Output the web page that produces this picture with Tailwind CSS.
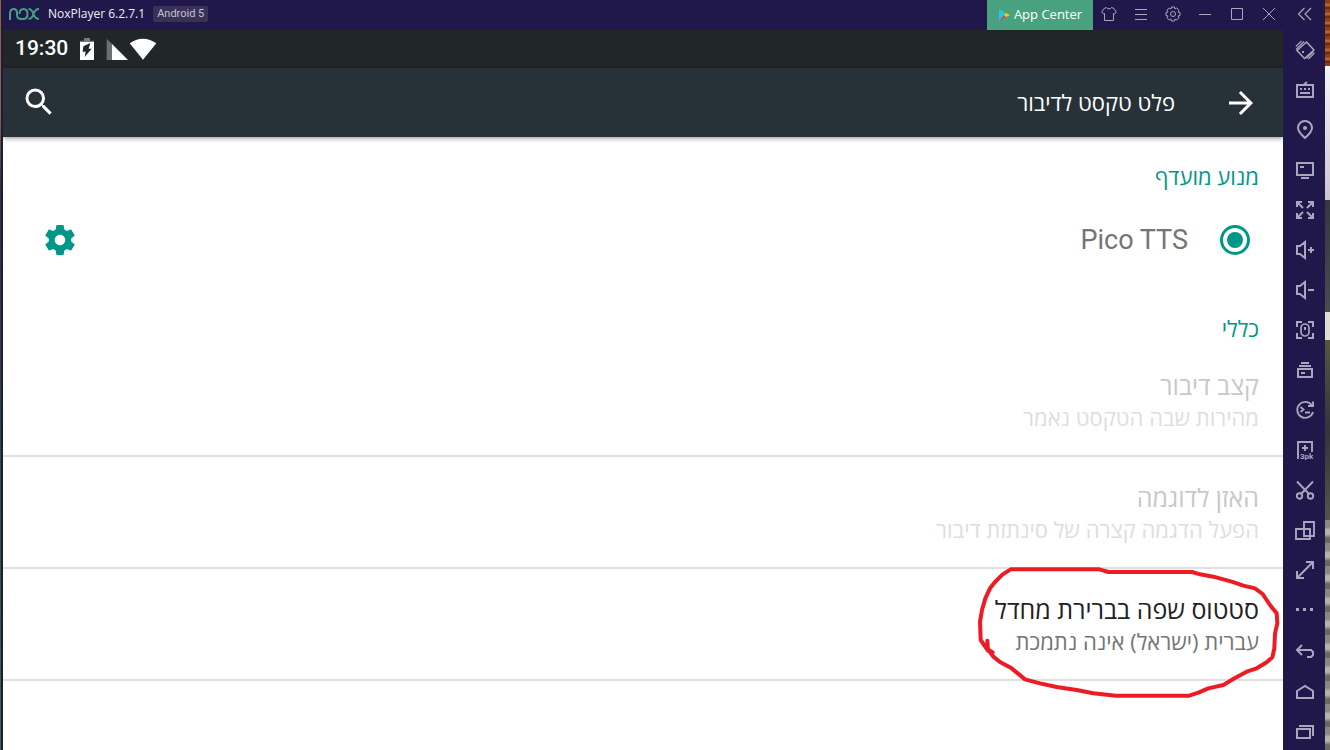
<!DOCTYPE html>
<html lang="he">
<head>
    <meta charset="UTF-8">
    <meta name="viewport" content="width=device-width, initial-scale=1.0">
    <title>NoxPlayer 6.2.7.1</title>
    <script src="https://cdn.jsdelivr.net/npm/@tailwindcss/browser@4"></script>
</head>
<body class="h-screen flex overflow-hidden bg-[#20184a] font-['Roboto','Open_Sans',sans-serif]">

    <!-- Desktop showing past the left edge -->
    <div class="w-px shrink-0 bg-linear-to-b from-[#8a6a30] from-15% via-[#28401f] via-25% to-[#3c6a35]"></div>

    <!-- Emulator window -->
    <div class="flex-1 min-w-0 flex flex-col">

        <!-- Title bar -->
        <header class="h-[30px] shrink-0 flex items-start text-[#a9a6bd]">
            <div class="h-7 flex items-center">
                <svg class="ml-2 w-[31px] h-3" viewBox="0 0 31 12" fill="none" stroke="#45a182" stroke-width="2" aria-hidden="true">
                    <path d="M1 12V6C1 2.500 2.500 1 4.500 1S8 2.500 8 5V7C8 9.500 10 11 12.500 11H14C17 11 18.500 9 18.500 6S17 1 14.500 1 10.500 3 10.500 6" />
                    <path d="M19.500 1C22.500 1 23.500 3 24.500 6S27 11 30 11M30 1C27 1 25.500 3 24.500 6S22.500 11 19.500 11" />
                </svg>
                <h1 class="ml-2 text-[12px] text-[#f0eff5] font-['Open_Sans',sans-serif]">NoxPlayer 6.2.7.1</h1>
                <span class="ml-2 px-1 h-4 leading-4 rounded-xs bg-[#3a3159] text-[11px] text-[#c5c2d3]">Android 5</span>
            </div>
            <button class="ml-auto w-[106px] h-full flex items-center justify-center gap-1 bg-[#48a27f] text-white text-[13px] font-['Open_Sans',sans-serif]">
                <svg class="w-3 h-3" viewBox="0 0 12 12" aria-hidden="true">
                    <path d="M1 0v12l5-6z" fill="#21c5f5" />
                    <path d="M1 0l7 4-2 2z" fill="#27d79b" />
                    <path d="M1 12l7-4-2-2z" fill="#ee3b55" />
                    <path d="M8 4l4 2-4 2-2-2z" fill="#fcc917" />
                </svg>
                App Center
            </button>
            <button class="w-8 h-7 grid place-items-center" aria-label="Theme">
                <svg class="w-4 h-4" viewBox="0 0 16 16" fill="none" stroke="currentColor"><path d="M5.500 1.500C6 3.300 10 3.300 10.500 1.500L13 2.500 15.300 6 13.500 8 12.500 7.500V14.500H3.500V7.500L2.500 8 .7 6 3 2.500z" /></svg>
            </button>
            <button class="w-8 h-7 grid place-items-center" aria-label="Menu">
                <svg class="w-4 h-4" viewBox="0 0 16 16" stroke="currentColor"><path d="M2 3.500h12M2 8.500h12M2 13.500h12" /></svg>
            </button>
            <button class="w-8 h-7 grid place-items-center" aria-label="Settings">
                <svg class="w-4 h-4" viewBox="0 0 16 16" fill="none" stroke="currentColor"><path d="M6.500 1h3l.5 2 1.800-1 2.200 2.200-1 1.800 2 .5v3l-2 .5 1 1.800-2.200 2.200-1.800-1-.5 2h-3L6 13l-1.800 1L2 11.800 3 10l-2-.5v-3L3 6 2 4.200 4.200 2 6 3z" /><circle cx="8" cy="8" r="2.500" /></svg>
            </button>
            <button class="w-8 h-7 grid place-items-center" aria-label="Minimize">
                <svg class="w-4 h-4" viewBox="0 0 16 16" stroke="currentColor"><path d="M2 8.500h12" /></svg>
            </button>
            <button class="w-8 h-7 grid place-items-center" aria-label="Maximize">
                <svg class="w-4 h-4" viewBox="0 0 16 16" fill="none" stroke="currentColor"><path d="M2.500 2.500h11v11h-11z" /></svg>
            </button>
            <button class="w-8 h-7 grid place-items-center" aria-label="Close">
                <svg class="w-4 h-4" viewBox="0 0 16 16" stroke="currentColor"><path d="M2 2l12 12M14 2L2 14" /></svg>
            </button>
            <button class="w-10 h-7 grid place-items-center" aria-label="Collapse toolbar">
                <svg class="w-4 h-4" viewBox="0 0 16 16" fill="none" stroke="currentColor" stroke-width="1.200"><path d="M7.500 2l-6 6 6 6M14 2L8 8l6 6" /></svg>
            </button>
        </header>

        <div class="flex-1 min-h-0 flex">

            <!-- Android screen -->
            <div class="ml-[2px] flex-1 min-w-0 flex flex-col bg-white overflow-hidden">

                <div class="h-[38px] shrink-0 flex items-center bg-[#212629] text-white">
                    <span class="ml-3 text-[21px] font-medium">19:30</span>
                    <svg class="ml-3 w-[14px] h-[22px]" viewBox="0 0 42 66" aria-hidden="true">
                        <path d="M0 8H12V0H30V8H42V14H0z" fill="#777b7d" />
                        <path d="M0 12H42V66H0z" fill="#fff" />
                        <path d="M31 15L10 25 8 41H17L14 57 35 32H26z" fill="#212629" />
                    </svg>
                    <svg class="ml-3 w-[22px] h-[22px]" viewBox="0 0 66 66" aria-hidden="true">
                        <path d="M2 2L18 18V66H2z" fill="#6b6f71" />
                        <path d="M18 18L66 66H18z" fill="#fff" />
                    </svg>
                    <svg class="ml-px w-7 h-[22px]" viewBox="0 0 84 66" aria-hidden="true">
                        <path d="M42 65L2 16Q20 2 42 2T82 16z" fill="#fff" />
                    </svg>
                </div>

                <div dir="rtl" class="h-[69px] shrink-0 flex items-center px-6 bg-[#263238] text-white shadow-[0_1px_5px_rgba(0,0,0,0.45)]">
                    <button aria-label="חזרה">
                        <svg class="w-9 h-9" viewBox="0 0 24 24" fill="currentColor"><path d="M12 4l-1.410 1.410L16.170 11H4v2h12.170l-5.580 5.590L12 20l8-8z" /></svg>
                    </button>
                    <h2 class="ms-12 text-[22px] font-['Open_Sans',sans-serif]">פלט טקסט לדיבור</h2>
                    <button class="ms-auto -me-[6px] pb-[2px]" aria-label="חיפוש">
                        <svg class="w-9 h-9" viewBox="0 0 24 24" fill="currentColor"><path d="M15.500 14h-.79l-.28-.27A6.471 6.471 0 0 0 16 9.500 6.500 6.500 0 1 0 9.500 16c1.610 0 3.090-.59 4.230-1.570l.27.280v.79l5 4.990L20.490 19l-4.990-5zm-6 0C7.010 14 5 11.990 5 9.500S7.010 5 9.500 5 14 7.010 14 9.500 11.990 14 9.500 14z" /></svg>
                    </button>
                </div>

                <main dir="rtl" class="font-['Open_Sans',sans-serif]">
                    <h3 class="px-6 pt-[23px] text-[22px] leading-8 text-[#009688]">מנוע מועדף</h3>
                    <div class="h-24 ps-[33px] pe-[39px] flex items-center">
                        <input id="pico" type="radio" name="engine" checked class="appearance-none w-[30px] h-[30px] rounded-full border-3 border-[#009688] p-1 bg-[#009688] bg-clip-content">
                        <label for="pico" class="ms-8 font-['Roboto',sans-serif] text-[27px] text-[#757575]">Pico TTS</label>
                        <button class="ms-auto text-[#009688]" aria-label="הגדרות Pico TTS">
                            <svg class="w-9 h-9" viewBox="0 0 24 24" fill="currentColor"><path d="M19.430 12.980c.04-.32.07-.64.07-.98s-.03-.66-.07-.98l2.110-1.650c.19-.15.24-.42.12-.64l-2-3.460c-.12-.22-.39-.3-.61-.22l-2.490 1c-.52-.4-1.080-.73-1.690-.98l-.38-2.650C14.460 2.180 14.250 2 14 2h-4c-.25 0-.46.18-.49.42l-.38 2.650c-.61.25-1.170.59-1.690.98l-2.490-1c-.23-.09-.49 0-.61.22l-2 3.460c-.13.22-.07.49.12.64l2.110 1.650c-.04.32-.07.65-.07.98s.03.66.07.98l-2.110 1.650c-.19.15-.24.42-.12.64l2 3.460c.12.22.39.3.61.22l2.490-1c.52.4 1.080.73 1.690.98l.38 2.650c.03.24.24.42.49.42h4c.25 0 .46-.18.49-.42l.38-2.650c.61-.25 1.170-.59 1.690-.98l2.490 1c.23.09.49 0 .61-.22l2-3.460c.12-.22.07-.49-.12-.64l-2.110-1.650zM12 15.500c-1.930 0-3.500-1.570-3.500-3.500s1.570-3.500 3.500-3.500 3.500 1.570 3.500 3.500-1.570 3.500-3.500 3.500z" /></svg>
                        </button>
                    </div>
                    <h3 class="px-6 pt-6 text-[22px] leading-8 text-[#009688]">כללי</h3>

                    <ul class="pt-px">
                        <li class="h-28 px-6 pt-6 border-b-2 border-[#e0e0e0]">
                            <p class="text-[25px] leading-8 text-[#c8c8c8]">קצב דיבור</p>
                            <p class="text-[22px] leading-8 text-[#dedede]">מהירות שבה הטקסט נאמר</p>
                        </li>
                        <li class="h-28 px-6 pt-6 border-b-2 border-[#e0e0e0]">
                            <p class="text-[25px] leading-8 text-[#c8c8c8]">האזן לדוגמה</p>
                            <p class="text-[22px] leading-8 text-[#dedede]">הפעל הדגמה קצרה של סינתזת דיבור</p>
                        </li>
                        <li class="relative h-28 px-6 pt-6 border-b-2 border-[#e0e0e0]">
                            <p class="text-[25px] leading-8 text-[#212121]">סטטוס שפה בברירת מחדל</p>
                            <p class="text-[22px] leading-8 text-[#757575]">עברית (ישראל) אינה נתמכת</p>
                            <!-- Hand-drawn marker circle -->
                            <svg class="absolute -top-[9px] right-0 w-[310px] h-[145px]" viewBox="39 0 930 435" fill="none" stroke="#ed1c24" stroke-width="12" stroke-linejoin="round" stroke-linecap="round" aria-hidden="true">
                                <path d="M82 242L84 272 62 240 60 185 66 150 76 115 90 85 105 66 128 43 152 28H418L445 36H696L720 43 760 50 815 65 850 77 885 85 908 102 930 135 950 160 952 190 945 220 943 265 937 292 920 307 890 325 860 335 825 354 790 375 745 385 715 398 688 407H468L400 400 350 390 290 381 240 370 195 358 155 325 120 306 100 290 84 268 98 277" />
                            </svg>
                        </li>
                    </ul>
                </main>
            </div>

            <!-- Side toolbar -->
            <nav class="w-[42px] pl-[2px] shrink-0 flex flex-col overflow-hidden text-[#a9a6bd] *:shrink-0">
                <button class="h-10 grid place-items-center" aria-label="Rotate">
                    <svg class="w-5 h-5" viewBox="0 0 20 20" fill="none" stroke="currentColor" stroke-width="1.500"><path d="M11.500 2L19 10 9.500 18.500 2 10.500z" /><path d="M.8 6.500L6.500 1M1 9.500L9 1.500M13.500 19l6-6M11.500 18.500l7-7" stroke-width="1.100" /><path d="M7 11h2v2H7z" fill="currentColor" stroke="none" /></svg>
                </button>
                <button class="h-10 grid place-items-center" aria-label="Keyboard control">
                    <svg class="w-5 h-5" viewBox="0 0 20 20" fill="none" stroke="currentColor" stroke-width="2"><path d="M2 5h16v12H2zM9 4.500L12 2M5 13h10" /><path d="M5 9h2M9 9h2M13 9h2" /></svg>
                </button>
                <button class="h-10 grid place-items-center" aria-label="Location">
                    <svg class="w-5 h-5" viewBox="0 0 20 20" fill="none" stroke="currentColor" stroke-width="2"><path d="M10 18C6 14.500 3 11.500 3 8a7 7 0 0 1 14 0c0 3.500-3 6.500-7 10z" /><circle cx="10" cy="8" r="2" fill="currentColor" stroke="none" /></svg>
                </button>
                <button class="h-10 grid place-items-center" aria-label="Screen">
                    <svg class="w-5 h-5" viewBox="0 0 20 20" fill="none" stroke="currentColor" stroke-width="2"><path d="M2 3h16v12H2zM5 7h4M6 18h8" /></svg>
                </button>
                <button class="h-10 grid place-items-center" aria-label="Full screen">
                    <svg class="w-5 h-5" viewBox="0 0 20 20" fill="none" stroke="currentColor" stroke-width="2"><path d="M2 7V2h5M2 2l6 6M13 2h5v5M18 2l-6 6M2 13v5h5M2 18l6-6M13 18h5v-5M18 18l-6-6" /></svg>
                </button>
                <button class="h-10 grid place-items-center" aria-label="Volume up">
                    <svg class="w-5 h-5" viewBox="0 0 20 20" fill="none" stroke="currentColor" stroke-width="2"><path d="M2 6h3l5-4v16l-5-4H2zM13 10h6M16 7v6" /></svg>
                </button>
                <button class="h-10 grid place-items-center" aria-label="Volume down">
                    <svg class="w-5 h-5" viewBox="0 0 20 20" fill="none" stroke="currentColor" stroke-width="2"><path d="M2 6h3l5-4v16l-5-4H2zM13 10h6" /></svg>
                </button>
                <button class="h-10 grid place-items-center" aria-label="Mouse lock">
                    <svg class="w-5 h-5" viewBox="0 0 20 20" fill="none" stroke="currentColor" stroke-width="2"><path d="M2 7V2h5M13 2h5v5M2 13v5h5M13 18h5v-5M10 7v3" /><rect x="6" y="4" width="8" height="12" rx="4" stroke-width="1.700" /></svg>
                </button>
                <button class="h-10 grid place-items-center" aria-label="Multi instance">
                    <svg class="w-5 h-5" viewBox="0 0 20 20" fill="none" stroke="currentColor" stroke-width="2"><path d="M6 3h8M4 6h12M3 9h14v8H3zM6 13h4" /></svg>
                </button>
                <button class="h-10 grid place-items-center" aria-label="Script">
                    <svg class="w-5 h-5" viewBox="0 0 20 20" fill="none" stroke="currentColor" stroke-width="1.900"><path d="M17 5.500A8 8 0 1 0 18 12M18 1.500V6h-5M5.500 7l3 2.500-3 2.500M10 12.500h5" /></svg>
                </button>
                <button class="h-10 grid place-items-center" aria-label="Install APK">
                    <svg class="w-5 h-5" viewBox="0 0 20 20" fill="none" stroke="currentColor" stroke-width="1.900"><path d="M3 19V2h14v10M10 5v6M7 8h6" /><text x="5" y="19" fill="currentColor" stroke="none" font-size="8" font-weight="bold" font-family="Roboto, sans-serif">3pk</text></svg>
                </button>
                <button class="h-10 grid place-items-center" aria-label="Screenshot">
                    <svg class="w-5 h-5" viewBox="0 0 20 20" fill="none" stroke="currentColor" stroke-width="1.900"><path d="M2 1.500L14 14M18 1.500L6 14" /><circle cx="4.500" cy="16" r="2.700" /><circle cx="15.500" cy="16" r="2.700" /></svg>
                </button>
                <button class="h-10 grid place-items-center" aria-label="Windows">
                    <svg class="w-5 h-5" viewBox="0 0 20 20" fill="none" stroke="currentColor" stroke-width="1.900"><path d="M9 2h10v14H9zM1 9h14v10H1z" /></svg>
                </button>
                <button class="h-10 grid place-items-center" aria-label="Resize">
                    <svg class="w-5 h-5" viewBox="0 0 20 20" fill="none" stroke="currentColor" stroke-width="2"><path d="M2 18L18 2M11 2h7v7M2 11v7h7" /></svg>
                </button>
                <button class="h-10 grid place-items-center" aria-label="More">
                    <svg class="w-5 h-5" viewBox="0 0 20 20" fill="currentColor"><path d="M1 8h3v3H1zM8 8h3v3H8zM15 8h3v3h-3z" /></svg>
                </button>
                <button class="mt-[2px] h-10 grid place-items-center" aria-label="Back">
                    <svg class="w-5 h-5" viewBox="0 0 20 20" fill="none" stroke="currentColor" stroke-width="2"><path d="M7 3L2 8l5 5M2 8h14l2 2v3l-2 2h-4" /></svg>
                </button>
                <button class="h-10 grid place-items-center" aria-label="Home">
                    <svg class="w-5 h-5" viewBox="0 0 20 20" fill="none" stroke="currentColor" stroke-width="2"><path d="M2 9l8-5 8 5v7H2z" /></svg>
                </button>
                <button class="h-10 grid place-items-center" aria-label="Recent apps">
                    <svg class="w-5 h-5" viewBox="0 0 20 20" fill="none" stroke="currentColor" stroke-width="2"><path d="M2 7h13v9H2zM4 4h14v10" /></svg>
                </button>
            </nav>
        </div>
    </div>

    <!-- Desktop showing past the right edge -->
    <div class="w-[5px] shrink-0 flex flex-col">
        <div class="h-[66px] bg-[repeating-linear-gradient(#8c3f14_0_3px,#b5622c_4px_6px,#6d2c0c_7px_9px)]"></div>
        <div class="h-[134px] bg-linear-to-b from-[#f4f4f8] to-[#cfc4d2]"></div>
        <div class="h-28 bg-linear-to-b from-[#36373f] to-[#4a4b50]"></div>
        <div class="h-7 bg-[#dedfd2]"></div>
        <div class="h-[180px] bg-linear-to-b from-[#55573f] via-[#34343a] to-[#55544a]"></div>
        <div class="flex-1 bg-[repeating-linear-gradient(#8b8782_0_7px,#b8b3aa_10px_14px,#6b6762_18px_23px)]"></div>
    </div>

</body>
</html>
